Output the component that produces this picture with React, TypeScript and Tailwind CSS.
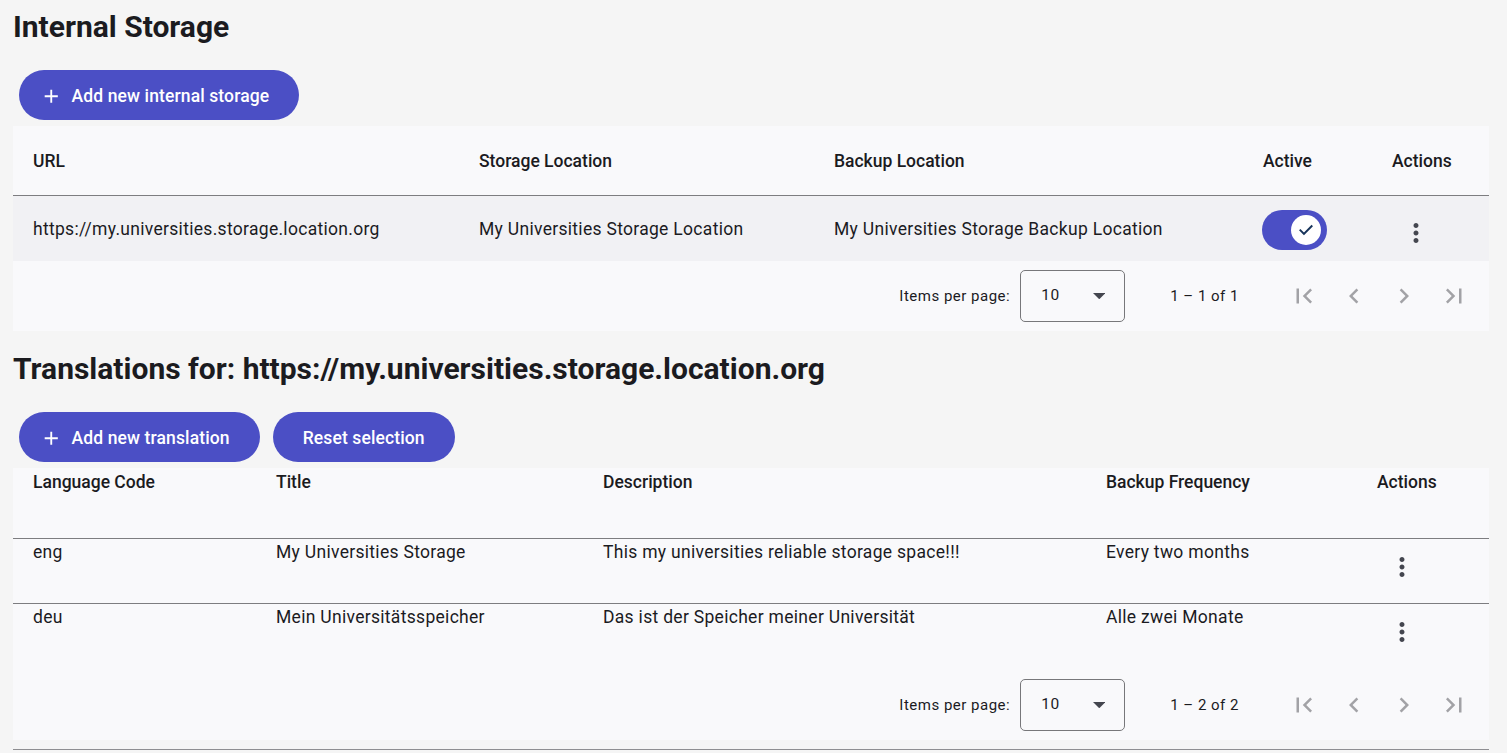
import React from 'react';

const iconPaths = {
  first: 'M18.41 16.59L13.82 12l4.59-4.59L17 6l-6 6 6 6zM6 6h2v12H6z',
  prev: 'M15.41 7.41L14 6l-6 6 6 6 1.41-1.41L10.83 12z',
  next: 'M10 6L8.59 7.41 13.17 12l-4.58 4.59L10 18l6-6z',
  last: 'M5.59 7.41L10.18 12l-4.59 4.59L7 18l6-6-6-6zM16 6h2v12h-2z',
  more: 'M12 8c1.1 0 2-.9 2-2s-.9-2-2-2-2 .9-2 2 .9 2 2 2zm0 2c-1.1 0-2 .9-2 2s.9 2 2 2 2-.9 2-2-.9-2-2-2zm0 6c-1.1 0-2 .9-2 2s.9 2 2 2 2-.9 2-2-.9-2-2-2z',
  add: 'M19 13h-6v6h-2v-6H5v-2h6V5h2v6h6v2z',
  check: 'M9.55 18.2 3.65 12.3 5.275 10.675 9.55 14.95 18.725 5.775 20.35 7.4Z',
};

function Icon({ d, className }: { d: string; className?: string }) {
  return (
    <svg viewBox="0 0 24 24" className={className} fill="currentColor" aria-hidden>
      <path d={d} />
    </svg>
  );
}

function PillButton({ label, withIcon }: { label: string; withIcon?: boolean }) {
  return (
    <button
      type="button"
      className={
        'flex h-[50px] items-center rounded-full bg-[#4b4fc5] pr-[30px] pt-[2px] text-[17.5px] font-medium tracking-[0.12px] text-white ' +
        (withIcon ? 'pl-[21px]' : 'pl-[30px]')
      }
    >
      {withIcon && <Icon d={iconPaths.add} className="mr-[9px] h-[22.5px] w-[22.5px]" />}
      {label}
    </button>
  );
}

function MoreButton() {
  return (
    <button type="button" className="flex h-[50px] w-[50px] items-center justify-center text-[#44464f]">
      <Icon d={iconPaths.more} className="h-[30px] w-[30px]" />
    </button>
  );
}

function Toggle() {
  return (
    <div className="flex h-[40px] w-[65px] items-center justify-end rounded-full bg-[#4b4fc5] pr-[6px]">
      <div className="flex h-[30px] w-[30px] items-center justify-center rounded-full bg-white text-[#16335a]">
        <Icon d={iconPaths.check} className="h-[20px] w-[20px]" />
      </div>
    </div>
  );
}

function Paginator({ range }: { range: string }) {
  return (
    <div className="flex h-[70px] items-center justify-end pr-[10px] text-[15px] tracking-[0.5px] text-[#1b1b1f]">
      <span>Items per page:</span>
      <div className="ml-[10px] flex h-[52px] w-[105px] items-center justify-between rounded-[5px] border border-[#77777a] pl-[20px] pr-[19px] text-[15.5px]">
        <span>10</span>
        <svg viewBox="0 0 10 5" className="h-[6.25px] w-[12.5px] text-[#44464f]" fill="currentColor">
          <path d="M0 0l5 5 5-5z" />
        </svg>
      </div>
      <span className="ml-[45px] mr-[40px]">{range}</span>
      {[iconPaths.first, iconPaths.prev, iconPaths.next, iconPaths.last].map((d, i) => (
        <button key={i} type="button" className="flex h-[50px] w-[50px] items-center justify-center text-[#a2a2a6]">
          <Icon d={d} className="h-[30px] w-[30px]" />
        </button>
      ))}
    </div>
  );
}

const storageCols = 'grid grid-cols-[446px_355px_429px_129px_1fr]';
const translationCols = 'grid grid-cols-[243px_327px_503px_271px_1fr]';

const translations = [
  {
    code: 'eng',
    title: 'My Universities Storage',
    description: 'This my universities reliable storage space!!!',
    frequency: 'Every two months',
  },
  {
    code: 'deu',
    title: 'Mein Universitätsspeicher',
    description: 'Das ist der Speicher meiner Universität',
    frequency: 'Alle zwei Monate',
  },
];

export default function App() {
  return (
    <div className="min-h-screen bg-[#f5f5f5] pl-[13px] pr-[18px] font-['Roboto',sans-serif] text-[#1b1b1f]">
      {/* Internal storage */}
      <h1 className="pt-[8px] text-[30px] font-bold leading-[38px] text-[#1b1b1f]">Internal Storage</h1>
      <div className="mt-[24px] flex pl-[6px]">
        <PillButton label="Add new internal storage" withIcon />
      </div>

      <div className="mt-[6px] bg-[#f9f9fb]">
        <div className={storageCols + ' h-[70px] items-center border-b border-[#7d7d80] pt-[1px] text-[17.5px] font-medium'}>
          <div className="pl-[20px]">URL</div>
          <div className="pl-[20px]">Storage Location</div>
          <div className="pl-[20px]">Backup Location</div>
          <div className="pl-[20px]">Active</div>
          <div className="pl-[20px]">Actions</div>
        </div>
        <div className={storageCols + ' h-[65px] items-center bg-[#f1f1f4] pt-[2px] text-[17.5px] tracking-[0.3px]'}>
          <div className="pl-[20px]">https://my.universities.storage.location.org</div>
          <div className="pl-[20px]">My Universities Storage Location</div>
          <div className="pl-[20px]">My Universities Storage Backup Location</div>
          <div className="pl-[19px]">
            <Toggle />
          </div>
          <div className="pl-[19px] pt-[6px]">
            <MoreButton />
          </div>
        </div>
        <Paginator range="1 – 1 of 1" />
      </div>

      {/* Translations */}
      <h2 className="mt-[19px] text-[30px] font-bold leading-[38px] text-[#1b1b1f]">
        Translations for: https://my.universities.storage.location.org
      </h2>
      <div className="mt-[24px] flex gap-[13px] pl-[6px]">
        <PillButton label="Add new translation" withIcon />
        <PillButton label="Reset selection" />
      </div>

      <div className="mt-[6px] bg-[#f9f9fb]">
        <div className={translationCols + ' h-[71px] border-b border-[#7d7d80] pt-[2px] text-[17.5px] font-medium leading-[25px]'}>
          <div className="pl-[20px]">Language Code</div>
          <div className="pl-[20px]">Title</div>
          <div className="pl-[20px]">Description</div>
          <div className="pl-[20px]">Backup Frequency</div>
          <div className="pl-[20px]">Actions</div>
        </div>
        {translations.map((t, i) => (
          <div
            key={t.code}
            className={
              translationCols +
              ' h-[65px] text-[17.5px] leading-[25px] tracking-[0.3px]' +
              (i < translations.length - 1 ? ' border-b border-[#7d7d80]' : '')
            }
          >
            <div className="pl-[20px] pt-[1px]">{t.code}</div>
            <div className="pl-[20px] pt-[1px]">{t.title}</div>
            <div className="pl-[20px] pt-[1px]">{t.description}</div>
            <div className="pl-[20px] pt-[1px]">{t.frequency}</div>
            <div className="pl-[20px] pt-[3px]">
              <MoreButton />
            </div>
          </div>
        ))}
        <div className="pt-[1px]">
          <Paginator range="1 – 2 of 2" />
        </div>
      </div>
      <div className="mt-[9px] h-px bg-[#8e8e91]" />
    </div>
  );
}
